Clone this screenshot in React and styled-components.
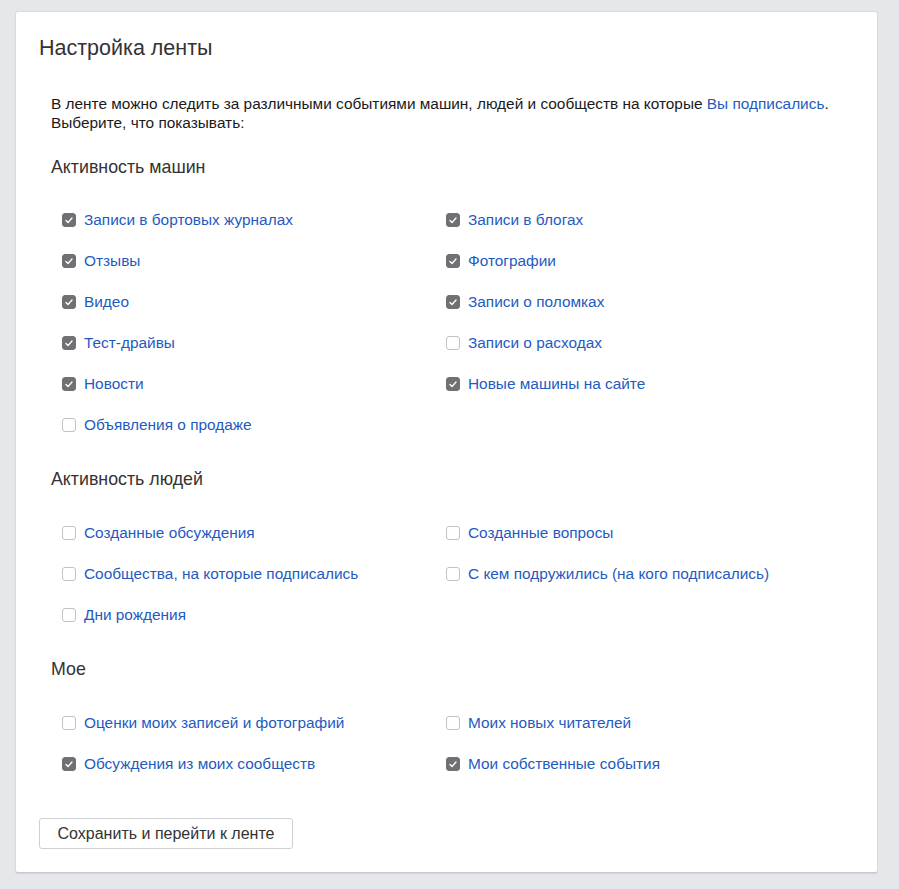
import React from 'react';
import styled, { createGlobalStyle } from 'styled-components';

const GlobalStyle = createGlobalStyle`
  body {
    margin: 0;
    background: #e6e7eb;
    font-family: "Liberation Sans", Arial, sans-serif;
    color: #222;
  }
`;

const Page = styled.div`
  padding: 11px 21px 17px 15px;
`;

const Card = styled.div`
  background: #fff;
  border: 1px solid #d9dadd;
  border-bottom-color: #c8c9cc;
  border-radius: 3px;
  box-shadow: 0 1px 1px rgba(0, 0, 0, 0.08);
  padding: 24px 23px 23px 23px;
`;

const Title = styled.h1`
  margin: 0;
  font-size: 21.5px;
  font-weight: 400;
  color: #333;
  line-height: 24px;
`;

const Body = styled.div`
  padding: 0 12px;
`;

const Intro = styled.p`
  margin: 34px 0 0;
  font-size: 15.4px;
  line-height: 19px;
  color: #1a1a1a;
`;

const Link = styled.a`
  color: #1f5bbf;
  text-decoration: none;
`;

const SectionTitle = styled.h2`
  margin: ${(p) => (p.$first ? '24px' : '12px')} 0 0;
  font-size: 17.8px;
  font-weight: 400;
  color: #333;
  line-height: 22px;
`;

const OptionGrid = styled.div`
  display: grid;
  grid-template-columns: 384px 1fr;
  grid-auto-rows: 41px;
  margin-top: ${(p) => (p.$first ? '32px' : '33px')};
  padding-left: 11px;
`;

const Option = styled.label`
  display: flex;
  align-items: center;
  gap: 8px;
  height: 20px;
  font-size: 15.4px;
  color: #1f5bbf;
  cursor: pointer;
`;

const Box = styled.span`
  flex: none;
  width: 14px;
  height: 14px;
  box-sizing: border-box;
  border-radius: 3px;
  border: 1px solid ${(p) => (p.$checked ? '#717175' : '#c2c3c6')};
  background: ${(p) => (p.$checked ? '#717175' : '#fff')};
  display: flex;
  align-items: center;
  justify-content: center;
`;

const Button = styled.button`
  margin-top: 23px;
  width: 254px;
  height: 31px;
  background: #fff;
  border: 1px solid #cfd0d3;
  border-radius: 3px;
  font-family: inherit;
  font-size: 16px;
  color: #333;
  cursor: pointer;
`;

const Check = ({ checked }) => (
  <Box $checked={checked}>
    {checked && (
      <svg width="8" height="7" viewBox="0 0 8 7">
        <path d="M1 3.6 L3 5.6 L7 1" fill="none" stroke="#fff" strokeWidth="1.4" strokeLinecap="round" strokeLinejoin="round" />
      </svg>
    )}
  </Box>
);

const sections = [
  {
    title: 'Активность машин',
    items: [
      ['Записи в бортовых журналах', true],
      ['Записи в блогах', true],
      ['Отзывы', true],
      ['Фотографии', true],
      ['Видео', true],
      ['Записи о поломках', true],
      ['Тест-драйвы', true],
      ['Записи о расходах', false],
      ['Новости', true],
      ['Новые машины на сайте', true],
      ['Объявления о продаже', false],
    ],
  },
  {
    title: 'Активность людей',
    items: [
      ['Созданные обсуждения', false],
      ['Созданные вопросы', false],
      ['Сообщества, на которые подписались', false],
      ['С кем подружились (на кого подписались)', false],
      ['Дни рождения', false],
    ],
  },
  {
    title: 'Мое',
    items: [
      ['Оценки моих записей и фотографий', false],
      ['Моих новых читателей', false],
      ['Обсуждения из моих сообществ', true],
      ['Мои собственные события', true],
    ],
  },
];

const App = () => (
  <>
    <GlobalStyle />
    <Page>
      <Card>
        <Title>Настройка ленты</Title>
        <Body>
          <Intro>
            В ленте можно следить за различными событиями машин, людей и сообществ на которые{' '}
            <Link href="#">Вы подписались</Link>.
            <br />
            Выберите, что показывать:
          </Intro>
          {sections.map((s, i) => (
            <React.Fragment key={s.title}>
              <SectionTitle $first={i === 0}>{s.title}</SectionTitle>
              <OptionGrid $first={i === 0}>
                {s.items.map(([label, checked]) => (
                  <Option key={label}>
                    <Check checked={checked} />
                    {label}
                  </Option>
                ))}
              </OptionGrid>
            </React.Fragment>
          ))}
        </Body>
        <Button>Сохранить и перейти к ленте</Button>
      </Card>
    </Page>
  </>
);

export default App;
